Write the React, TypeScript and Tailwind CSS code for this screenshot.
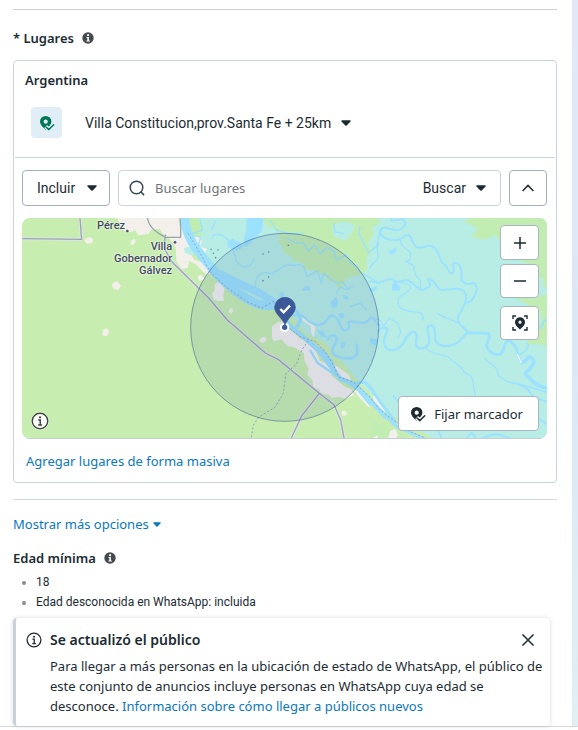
import { useState } from "react";

function InfoSolid() {
    return (
        <svg viewBox="0 0 12 12" className="w-3 h-3 shrink-0" aria-hidden="true">
            <circle cx="6" cy="6" r="5.7" fill="#444950" />
            <circle cx="6.1" cy="3.2" r="1.1" fill="#fff" />
            <path d="M4.5 5h2.4v3.4h.9v1H4.4v-1h.9V6h-.8z" fill="#fff" />
        </svg>
    );
}

function InfoOutline({ className }: { className: string }) {
    return (
        <svg viewBox="0 0 16 16" className={className} fill="none" stroke="currentColor" aria-hidden="true">
            <circle cx="8" cy="8" r="6.9" strokeWidth="1.3" />
            <circle cx="8" cy="4.7" r="1" fill="currentColor" stroke="none" />
            <path d="M6.4 7.2h1.8v4.4M6.3 11.6h3.6" strokeWidth="1.3" />
        </svg>
    );
}

function Caret({ className }: { className: string }) {
    return (
        <svg viewBox="0 0 10 6" className={className} aria-hidden="true">
            <path d="M1 .3h8c.7 0 1 .7.5 1.2L5.7 5.4a1 1 0 0 1-1.4 0L.5 1.5C0 1 .3.3 1 .3z" fill="currentColor" />
        </svg>
    );
}

function PinCheck({ fondo }: { fondo: string }) {
    return (
        <svg viewBox="0 0 16 16" className="w-4 h-4 shrink-0" fill="none" aria-hidden="true">
            <path fillRule="evenodd" d="M6.7 1a5.6 5.6 0 0 1 5.7 5.6c0 3.2-2.9 5.4-5.7 8.2C4 12.4 1 9.8 1 6.6A5.6 5.6 0 0 1 6.7 1zm0 3.6a2.1 2.1 0 1 0 0 4.2 2.1 2.1 0 0 0 0-4.2z" fill="currentColor" />
            <path d="M6.6 11.6l3.3 3 5-5" stroke={fondo} strokeWidth="4" />
            <path d="M7 12l2.9 2.6 4.8-4.9" stroke="currentColor" strokeWidth="1.5" strokeLinecap="round" strokeLinejoin="round" />
        </svg>
    );
}

function MapaDibujo() {
    return (
        <svg viewBox="0 0 1575 660" preserveAspectRatio="xMidYMid slice" className="block w-full h-full" aria-hidden="true">
            <rect width="1575" height="660" fill="#c8edb0" />

            {/* humedal */}
            <path d="M480 0L530 80L590 150L650 215L730 260L790 275L815 300L850 345L910 375L960 430L1000 480L1060 540L1100 590L1150 610L1190 635L1230 660H1575V0z" fill="#b8ede6" />

            <g transform="translate(474 -24)">
                <path d="M250 24l8 22 24 10 18 20-5 22 12 10 5 22 20 8 8 16 24 2 10 20 24 4 12 10 24 6 10 14 22 10 10 20 10-2 12-30 24-10 28-2 12-22-4-30 16-18-10-26 16-24-4-28 20-4V24z" fill="#c1edb2" />
                <path d="M465 42l25-8 35 10-8 22-20 26-32-10-8-20z" fill="#b8ede6" />
                <path d="M28 24l25 0 16 26-3 22-12 26-14-16-12-20z" fill="#c1edb2" />
                <path d="M372 392l16 12 20 6 10 18-4 22 16 22 22 20 22 2 16 16-14 12-30-16-30-10-32-60z" fill="#c1edb2" />
            </g>

            <g transform="translate(1044 -24)" fill="#c1edb2">
                <path d="M290 24h240v210l-12-8 2-20-12-4v-30l-60-20-4-18-22 4-10-8-10 14-4-20 16-20-12-16-14 4-10-16-38 14-38-12 20-14-8-16-24-6-8-12 18 4z" />
                <path d="M440 265l26-8 40 4 24-12v160l-24-8-34 2 2-20 12-34 30-14-6-30z" />
                <path d="M0 622l24 14 38 20 34 12 18 18H0z" />
            </g>

            {/* zonas urbanas */}
            <g transform="translate(-21 -24)" fill="#f3f0ec">
                <path d="M372 24h126l6 40 20 20 22 8-4 12 34 12-8 18-24-16-20 8 14 24 30 10 20 30-14 4-30-30-22-12-4 22-18 2-16-24-2-40-22-30-16-10-10-16-26 4-8 12-30 4-10-16z" />
                <path d="M306 24h60l22 10-2 18-20 2-16 12-22-2z" />
                <path d="M212 86l14-6 8 8-2 10-14 4-10-8zM348 92l10-6 4 10-8 10-8-4zM294 218l12-4 12 14-8 12-12-2-8-10zM264 360l8-6 10 6-2 14-8 4-10-2zM552 198l12 2 4 10-16 2z" />
                <path d="M536 78l18 4 8 14-6 10-18-6z" />
            </g>
            <path d="M486 90l14-4 18 6 4 14-14 6-20-8z" fill="#b8ede6" />
            <g transform="translate(474 -24)" fill="#f4f1ee">
                <path d="M104 222l16-8 14 20-4 24 2 14-18 2-14-8-4-16 8-8zM148 296l8-2 4 8-6 10-8-6zM242 384l12-4 6 8-4 8-10 2-8-6zM54 198l8-4 8 8-6 10-10-4z" />
                <path d="M276 350l18-14 22-4 10 24 20 16 18 16 22 6 22 30 12 28 22 8 20 20-8 16 40 34 20 8 8 18-28 10-16-6-22 4-10-10-24-4-4-12-18-2-2-24-16-18 4-18-12-22-2-24-30-18-20-4-18-20-22 6-6-10z" />
                <path d="M364 322l20 6 22 24-4 30-8-12-2-22-24-16zM448 468l16-4 40 28 10 18-22-2-30-16zM518 536l24 12 30 42-6 2-28-30zM486 604l10-2 6 10-10 6-8-6zM574 686l20-10v10z" />
            </g>
            <g transform="translate(1044 -24)" fill="#f3f0ec">
                <path d="M8 558l12 4 24 40 2 18-26-16-6-22zM60 664l16-8 8 18-6 12H54z" />
            </g>

            {/* río principal */}
            <g transform="translate(474 -24)" fill="none" stroke="#9ce2ff" strokeLinejoin="round">
                <path d="M14 24C18 90 60 130 92 170S150 235 190 260S240 288 285 286" strokeWidth="27" />
                <path d="M90 176C140 202 175 222 210 235S255 262 285 278" strokeWidth="23" />
                <path d="M282 285L310 325L338 355L382 390L420 425L445 460L480 505L525 525L560 560L620 624" strokeWidth="14" />
                <path d="M350 300L362 330L345 362L395 405L430 425L452 450L470 495" strokeWidth="10" />
                <path d="M525 520L556 516L575 538L600 575L650 640" strokeWidth="9" />
                <path d="M390 420l22 38 50 34 70 46 40 48" strokeWidth="7" />
                <path d="M600 600L650 650L740 690" strokeWidth="10" />
            </g>

            {/* arroyos dentro del radio */}
            <g transform="translate(474 -24)" fill="none" stroke="#9ce2ff" strokeWidth="4" strokeLinejoin="round" strokeLinecap="round">
                <path d="M24 66C40 90 70 66 58 96S90 140 105 170M60 30L68 60L38 70" />
                <path d="M96 86C100 60 140 76 150 100S200 112 212 80M105 32L96 60" />
                <path d="M160 122L170 155L190 172L210 166L222 148M226 232C224 190 250 184 270 190S300 160 330 165S345 155 372 172L382 200L412 182L424 218L430 190L470 220L488 216L505 238" />
                <path d="M320 84L350 100L370 98L385 124L404 104L420 132L440 112L462 124L470 150L500 134L512 160L530 166L544 190L570 202L600 222" />
                <path d="M540 50L536 70L552 100L566 128L590 108L596 84L600 60" />
                <path d="M270 32L290 60L330 72L364 70M460 40L466 66L490 70" />
                <path d="M340 318C376 300 372 340 410 344S440 306 462 318S480 370 500 360S490 330 520 335S560 342 570 326S590 352 600 346" strokeWidth="7" />
                <path d="M444 388C450 370 474 374 470 390S440 430 475 440S540 450 530 404" strokeWidth="8" />
                <path d="M470 250L480 230L500 240L520 228M510 290L540 280L560 300" />
            </g>
            <g transform="translate(474 -24)" fill="#9ce2ff">
                <path d="M200 24h50l-4 40-26 26-22 22-8-20 8-30zM142 94l16-8 24 12 4 16-20 8-22-10zM364 238l22-12 6 14-22 4zM298 250l10-6 6 12-12 10zM450 278l18-18 8 14-6 18-14 2zM490 254l16 6-2 10-14-4zM476 310l14-2 4 14-14 4zM566 238l18-8 8 8-18 10zM410 360l18 4 14 20-20-6zM570 384l22 4-2 18-18-4zM482 402l6-8 8 6-4 14-10 2z" />
            </g>

            {/* arroyos al este */}
            <g transform="translate(1044 -24)" fill="none" stroke="#9ce2ff" strokeLinejoin="round" strokeLinecap="round">
                <path d="M62 24C66 44 92 20 102 30S100 60 78 60S40 42 32 62S60 92 82 90S102 70 116 76S126 106 142 112S182 94 198 118S206 150 222 162S232 190 246 190S240 156 256 158S276 182 274 200S292 226 304 220S324 234 318 248S304 280 290 278" strokeWidth="6" />
                <path d="M0 214L24 218C50 214 60 200 74 212S104 202 120 214S148 244 162 238S188 228 176 214S188 206 198 224S212 242 236 238S278 236 286 250S282 290 268 312S272 342 294 368" strokeWidth="6" />
                <path d="M294 368L355 370C368 384 338 400 356 420S396 440 402 414S416 386 432 404S438 440 456 458" strokeWidth="9" />
                <path d="M456 458C474 454 470 434 484 444S488 466 478 478S462 486 472 498S504 530 530 534" strokeWidth="12" />
                <path d="M24 364C40 344 60 354 48 372S44 418 60 420S96 412 104 392S130 360 138 370S130 404 142 412S178 412 178 392S164 350 180 346S194 368 196 388S226 412 250 404S282 374 294 368" strokeWidth="7" />
                <path d="M92 90L94 104L122 128L120 150L106 154L130 166L136 194L152 212L150 240M72 212C110 220 134 226 116 242S84 256 84 276S98 300 122 304S158 300 160 330M202 310C230 330 262 326 294 364M164 412C190 440 226 430 240 446S276 466 280 482S304 488 308 510L316 556" strokeWidth="4" />
                <path d="M344 446L378 474L388 500L414 516L470 528L528 546M0 174C10 150 22 160 24 142S14 110 28 100M0 240L20 230M0 324L30 330L42 348L58 324L84 340L92 366L84 386" strokeWidth="4" />
                <path d="M500 358C530 350 510 330 530 330M440 520L472 536L488 560L530 575M505 625L530 642M205 664L216 686M290 684L305 668L318 684M340 682L378 672L420 684M70 558L84 572" strokeWidth="6" />
                <path d="M54 124l18-6 8-10-4 20-14 6zM66 222l10-8 16 16-2 12H66z" fill="#9ce2ff" stroke="none" />
                <path d="M470 400l6 6-8 14-20 16" strokeWidth="4" />
                <path d="M442 434l6 12 6 12" stroke="#f3f0ec" strokeWidth="4" />
            </g>

            {/* rutas */}
            <g fill="none" strokeLinejoin="round">
                <g stroke="#dfe3e6" strokeWidth="10">
                    <path d="M0 62L180 64M174 0L179 66" />
                    <path d="M430 50L426 90L450 132L560 240L616 306L730 405L768 424L890 524L936 560L956 606L966 660" />
                    <path d="M892 526L840 592L808 660" />
                </g>
                <g stroke="#98a6ae" strokeWidth="4">
                    <path d="M0 62L180 64M174 0L179 66" />
                    <path d="M376 0C382 32 408 46 430 58H476V30L474 0M430 50L426 90L450 132L560 240L616 306L730 405L768 424L890 524L936 560L956 606L966 660" />
                    <path d="M892 526L840 592L808 660" />
                </g>
                <g transform="translate(474 -24)" stroke="#93a6bd" strokeWidth="3" strokeDasharray="6 6">
                    <path d="M24 70L60 130L95 192L140 232L200 275L245 294L285 272M330 356L360 380L405 394L435 425L460 465L475 500L520 516L565 556L600 600L680 660L750 690" />
                    <path d="M385 392L365 420L350 462L318 490L310 550L285 592L235 622L220 646L214 684" />
                </g>
            </g>

            <g fill="#668bb0">
                <circle cx="567" cy="94" r="2.5" /><circle cx="588" cy="96" r="2.5" /><circle cx="574" cy="106" r="2.5" /><circle cx="581" cy="119" r="2.5" />
                <circle cx="723" cy="108" r="2.5" /><circle cx="740" cy="102" r="2.5" /><circle cx="799" cy="82" r="2.5" /><circle cx="723" cy="188" r="2.5" /><circle cx="740" cy="177" r="2.5" />
            </g>
            <circle cx="316" cy="39" r="4" fill="#4a5265" />
            <circle cx="459" cy="73" r="4" fill="#4a5265" />

            {/* radio de 25 km */}
            <circle cx="788" cy="328" r="282" fill="#3b5998" fillOpacity=".12" stroke="#3b5998" strokeOpacity=".55" strokeWidth="3" />

            {/* marcador */}
            <circle cx="788" cy="328" r="11" fill="#3b5998" stroke="#fff" strokeWidth="6" />
            <path d="M789 322C783 300 758 290 758 268a31 30 0 0 1 62 0C820 290 795 300 789 322z" fill="#3b5998" stroke="#34508c" strokeWidth="2" />
            <path d="M775 273l10 10 19-20" fill="none" stroke="#fff" strokeWidth="7" />
        </svg>
    );
}

const etiqueta = "absolute text-right text-[11px] leading-3 font-medium text-[#414a5c] [text-shadow:0_0_2px_#fff,0_0_2px_#fff]";
const botonMapa = "flex items-center justify-center bg-white border border-[#a9b4c2] rounded text-[#1c2b33]";
const textoNoto = "text-[13px] leading-5 font-['Noto_Sans',sans-serif]";

function Mapa() {
    return (
        <div className="relative h-[221px] rounded-lg overflow-hidden border-b border-[#c5cddb]">
            <MapaDibujo />

            <span className={`${etiqueta} left-[75px] top-[2px]`}>Pérez</span>
            <span className={`${etiqueta} left-[92px] top-[23px]`}>Villa<br />Gobernador<br />Gálvez</span>

            <div className="absolute right-2 top-[7px] w-[39px] flex flex-col">
                <button aria-label="Acercar" className={`${botonMapa} h-[35px]`}>
                    <svg viewBox="0 0 12 12" className="w-3 h-3" stroke="currentColor" strokeWidth="1.5"><path d="M6 0v12M0 6h12" /></svg>
                </button>
                <button aria-label="Alejar" className={`${botonMapa} h-[34px] mt-1`}>
                    <svg viewBox="0 0 12 12" className="w-3 h-3" stroke="currentColor" strokeWidth="1.5"><path d="M0 6h12" /></svg>
                </button>
                <button aria-label="Centrar mapa" className={`${botonMapa} h-[34px] mt-2`}>
                    <svg viewBox="0 0 16 16" className="w-4 h-4" fill="none" stroke="currentColor" strokeWidth="1.4">
                        <path d="M1 4V1h3M12 1h3v3M15 12v3h-3M4 15H1v-3" />
                        <path fillRule="evenodd" d="M8 2.2a5 5 0 0 1 5 5c0 3-2.8 5-5 7.2-2.200-2.200-5-4.200-5-7.200a5 5 0 0 1 5-5zm0 3.400a1.600 1.600 0 1 0 0 3.200 1.600 1.600 0 0 0 0-3.200z" fill="currentColor" stroke="none" />
                    </svg>
                </button>
            </div>

            <button aria-label="Información del mapa" className="absolute left-[9px] bottom-[8px] w-[18px] h-[18px] rounded-full bg-white text-[#3c4a3c]">
                <InfoOutline className="w-[18px] h-[18px]" />
            </button>

            <button className={`${textoNoto} absolute right-2 bottom-[7px] h-[35px] pl-[11px] pr-[15px] flex items-center gap-2 bg-white border border-[#a9b4c2] rounded`}>
                <PinCheck fondo="#fff" />
                Fijar marcador
            </button>
        </div>
    );
}

function App() {
    const [modo, setModo] = useState("Incluir");
    const [busqueda, setBusqueda] = useState("");
    const [mapaVisible, setMapaVisible] = useState(true);
    const [avisoVisible, setAvisoVisible] = useState(true);

    return (
        <div className="min-h-screen bg-white text-sm text-[#1c2b33] font-[Roboto,sans-serif]">
            <div className="flex border-b border-[#d5d9dd]">
                <main className="flex-1 min-w-0 pl-[13px] pr-[15px] pt-[9px]">
                    <section className="border-t border-[#cbd2dc] pt-[18px]">
                        <h2 className={`${textoNoto} flex items-center gap-2 font-semibold`}>
                            <span>* Lugares</span>
                            <InfoSolid />
                        </h2>

                        <div className="mt-3 border border-[#cbd2e0] rounded">
                            <div className="px-[11px] pt-[9px] pb-[19px]">
                                <h3 className={`${textoNoto} font-semibold`}>Argentina</h3>
                                <div className="mt-[17px] pl-[6px] flex items-center gap-[23px]">
                                    <span className="w-[31px] h-[31px] rounded bg-[#e1edf7] text-[#007857] flex items-center justify-center">
                                        <PinCheck fondo="#e1edf7" />
                                    </span>
                                    <button className="flex items-center gap-[10px]">
                                        Villa Constitucion,prov.Santa Fe + 25km
                                        <Caret className="w-[10px] h-[6px]" />
                                    </button>
                                </div>
                            </div>

                            <div className="mx-px border-t border-[#cbd2e0]" />

                            <div className="pl-2 pr-[9px] pt-3 pb-[11px]">
                                <div className="flex gap-2">
                                    <div className="relative">
                                        <select
                                            aria-label="Modo de ubicación"
                                            value={modo}
                                            onChange={(e) => setModo(e.target.value)}
                                            className="appearance-none w-[88px] h-9 pl-[14px] border border-[#a3afbc] rounded bg-white"
                                        >
                                            <option>Incluir</option>
                                            <option>Excluir</option>
                                        </select>
                                        <Caret className="absolute right-[13px] top-[15px] w-[10px] h-[6px] pointer-events-none" />
                                    </div>

                                    <div className="flex-1 min-w-0 h-9 flex items-center pl-[10px] pr-[14px] border border-[#cbd2dc] rounded">
                                        <svg viewBox="0 0 16 16" className="w-4 h-4 shrink-0" fill="none" stroke="#344854" strokeWidth="1.5" aria-hidden="true">
                                            <circle cx="7.5" cy="7.5" r="6.3" />
                                            <path d="M12 12l2.6 2.6" strokeLinecap="round" />
                                        </svg>
                                        <input
                                            type="text"
                                            aria-label="Buscar lugares"
                                            placeholder="Buscar lugares"
                                            value={busqueda}
                                            onChange={(e) => setBusqueda(e.target.value)}
                                            className={`${textoNoto} flex-1 min-w-0 ml-[10px] placeholder:text-[#6f7479] focus:outline-none`}
                                        />
                                        <button className="flex items-center gap-[10px]">
                                            Buscar
                                            <Caret className="w-[10px] h-[6px]" />
                                        </button>
                                    </div>

                                    <button
                                        aria-label="Mostrar u ocultar mapa"
                                        onClick={() => setMapaVisible(!mapaVisible)}
                                        className="w-[38px] h-9 flex items-center justify-center border border-[#a3afbc] rounded"
                                    >
                                        <svg viewBox="0 0 12 8" className="w-3 h-2" fill="none" stroke="currentColor" strokeWidth="1.5"><path d="M.6 7L6 1.4 11.4 7" /></svg>
                                    </button>
                                </div>

                                {mapaVisible && <div className="mt-3"><Mapa /></div>}

                                <a href="#masiva" className={`${textoNoto} block w-fit mt-3 ml-1 text-[#0a78be]`}>Agregar lugares de forma masiva</a>
                            </div>
                        </div>
                    </section>

                    <section className="mt-4 border-t border-[#d5d9dd] pt-[14px]">
                        <button className={`${textoNoto} flex items-center gap-1 text-[#0a78be]`}>
                            Mostrar más opciones
                            <Caret className="w-2 h-[5px]" />
                        </button>

                        <h2 className={`${textoNoto} mt-[14px] flex items-center gap-2 font-semibold`}>
                            Edad mínima
                            <InfoSolid />
                        </h2>

                        <ul className="mt-1 pl-[23px] text-xs leading-5 list-disc marker:text-[#8a8d91]">
                            <li>18</li>
                            <li>Edad desconocida en WhatsApp: incluida</li>
                        </ul>
                    </section>

                    {avisoVisible && (
                        <section className="mt-[6px] mr-[7px] flex items-start gap-2 pl-[10px] pr-1 pt-3 pb-[10px] border-l-3 border-[#c9d1d9] rounded shadow-[0_0_4px_rgba(0,0,0,0.16)]">
                            <InfoOutline className="w-4 h-4 mt-[2px] shrink-0" />
                            <div className="flex-1 min-w-0">
                                <div className="flex items-center justify-between">
                                    <h3 className="font-semibold leading-5 font-['Noto_Sans',sans-serif]">Se actualizó el público</h3>
                                    <button aria-label="Cerrar" onClick={() => setAvisoVisible(false)} className="p-1 mr-2">
                                        <svg viewBox="0 0 12 12" className="w-3 h-3" stroke="currentColor" strokeWidth="1.5"><path d="M.5.5l11 11M11.500.5l-11 11" /></svg>
                                    </button>
                                </div>
                                <p className={`${textoNoto} mt-[6px]`}>
                                    Para llegar a más personas en la ubicación de estado de WhatsApp, el público de este conjunto de anuncios incluye personas en WhatsApp cuya edad se desconoce. <a href="#info" className="text-[#0a78be]">Información sobre cómo llegar a públicos nuevos</a>
                                </p>
                            </div>
                        </section>
                    )}
                </main>

                <aside className="w-[6px] shrink-0 bg-linear-to-b from-[#e2e8f7] via-[#dce8f6] to-[#e0f0f3]" />
            </div>
        </div>
    );
}

export default App;
